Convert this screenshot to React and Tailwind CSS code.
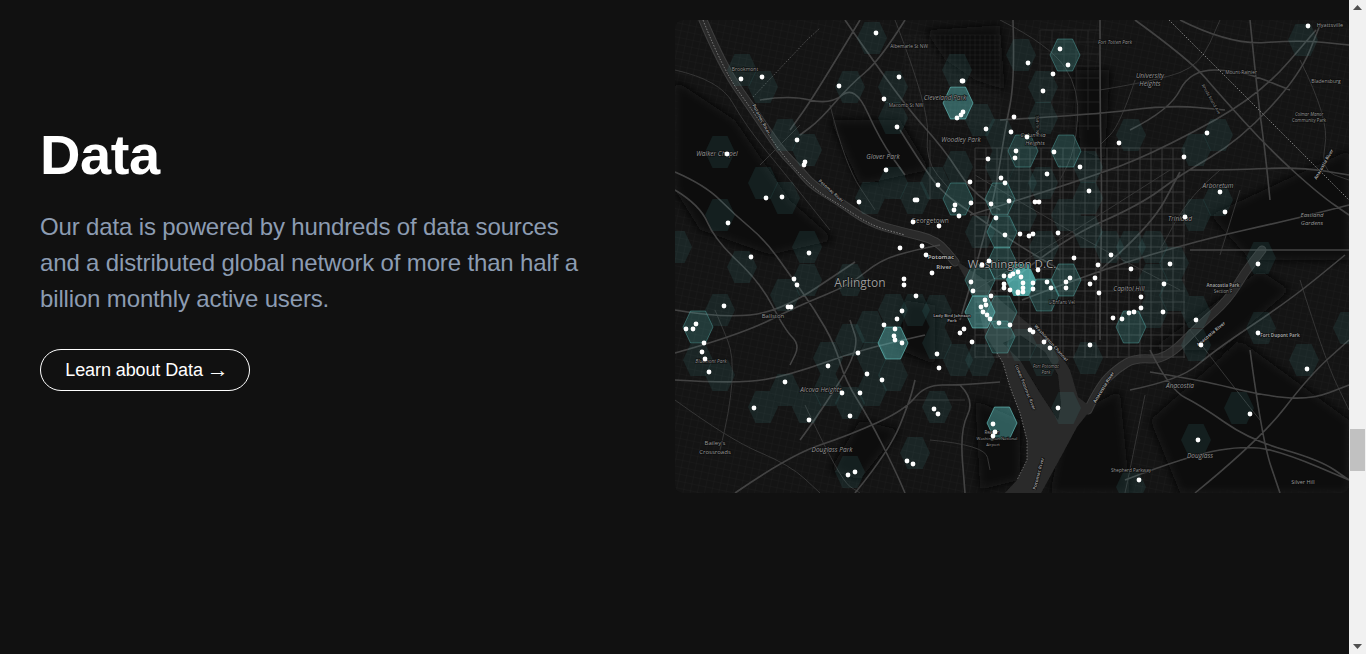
import React from 'react';

// all map data is in page pixels, the svg viewBox starts at the map's top left corner
const dimHexes = [
  [872, 38], [742, 70], [763, 87], [850, 87], [893, 87], [893, 118], [957, 70], [980, 120], [1000, 135],
  [785, 135], [807, 150], [720, 152], [763, 183], [785, 198], [720, 215], [677, 247], [807, 247],
  [870, 198], [893, 183], [915, 198], [935, 183], [1043, 87], [1043, 118], [1088, 167], [1088, 198],
  [1131, 135], [1218, 135], [1196, 150], [1303, 40], [1218, 200], [1196, 215], [1109, 247], [1261, 258],
  [1043, 183], [1021, 55], [742, 267], [785, 295], [807, 280], [850, 280], [720, 310],
  [698, 360], [720, 375], [870, 327], [915, 310], [893, 310], [828, 358], [850, 403], [872, 390],
  [893, 375], [872, 358], [850, 340], [828, 390], [785, 390], [763, 407], [807, 407], [937, 343],
  [937, 407], [915, 453], [850, 472], [1088, 358], [1066, 408], [1196, 312], [1196, 345], [1261, 328],
  [1348, 328], [1304, 360], [1239, 408], [1196, 440], [1131, 487], [1174, 263], [1153, 280], [1131, 247],
  [1153, 312], [1174, 295], [1000, 167], [1022, 183], [1066, 215], [1088, 232], [1044, 247], [1022, 215],
  [958, 167], [980, 232], [1153, 247], [958, 360], [980, 360], [937, 311], [1022, 345], [1044, 360],
];
const midHexes = [
  [958, 199], [1000, 199], [1002, 232], [1065, 55], [1066, 151], [1023, 151], [698, 327],
  [1066, 280], [1044, 295], [1131, 327], [980, 280], [1002, 312], [1000, 337], [1002, 263],
];
const brightHexes = [[958, 103], [893, 343], [980, 312], [1002, 423]];

const dots = [
  [876, 33], [741, 79], [762, 77], [839, 86], [899, 77], [884, 99], [962, 81], [963, 81], [963, 112], [961, 115],
  [957, 118], [897, 127], [1014, 117], [986, 129], [1011, 132], [797, 140], [805, 162], [804, 165], [727, 154],
  [988, 159], [1016, 151], [1015, 158], [886, 170], [938, 185], [970, 182], [1001, 178], [1005, 183], [766, 198],
  [782, 197], [859, 202], [915, 200], [917, 200], [955, 205], [954, 210], [971, 203], [991, 204], [1009, 201],
  [728, 223], [959, 216], [996, 218], [913, 222], [939, 226], [1005, 235], [809, 253], [900, 248], [922, 246],
  [751, 257], [926, 255], [1308, 26], [1060, 49], [1068, 65], [1028, 63], [1053, 74], [1043, 91], [1027, 137],
  [1054, 152], [1119, 143], [1207, 133], [1184, 157], [1080, 167], [1047, 174], [1089, 191], [1035, 202],
  [1039, 202], [1220, 192], [1225, 212], [1185, 217], [1020, 234], [1029, 236], [1033, 234], [1058, 233],
  [1074, 258], [1111, 255], [794, 279], [797, 285], [904, 279], [904, 285], [932, 273], [916, 296], [989, 261],
  [982, 265], [724, 306], [788, 307], [791, 307], [902, 311], [897, 319], [884, 325], [895, 329], [894, 336],
  [895, 340], [902, 343], [686, 329], [693, 329], [696, 324], [704, 343], [702, 352], [705, 359], [709, 372],
  [858, 353], [828, 366], [867, 374], [882, 380], [785, 382], [842, 393], [860, 393], [754, 408], [809, 420],
  [850, 416], [937, 354], [939, 368], [934, 409], [938, 414], [907, 461], [913, 464], [855, 472], [848, 475],
  [960, 333], [964, 329], [972, 342], [971, 282], [973, 291], [991, 296], [985, 300], [986, 305], [981, 307],
  [983, 312], [987, 315], [990, 319], [999, 323], [1010, 325], [993, 424], [995, 432], [993, 436], [1004, 276],
  [1004, 284], [1004, 288], [1010, 276], [1013, 274], [1018, 272], [1010, 290], [1018, 292], [1098, 265],
  [1131, 269], [1170, 264], [1258, 264], [1038, 270], [1021, 277], [1047, 282], [1066, 282], [1070, 278],
  [1095, 278], [1090, 284], [1164, 284], [1033, 283], [1033, 289], [1051, 288], [1066, 288], [1099, 293],
  [1023, 283], [1023, 288], [1018, 293], [1023, 292], [1141, 297], [1141, 308], [1134, 312], [1129, 313],
  [1163, 312], [1113, 318], [1122, 319], [1196, 320], [1258, 333], [1201, 345], [1090, 345], [1030, 330],
  [1033, 332], [1044, 342], [1050, 348], [1307, 369], [1058, 408], [1250, 414], [1198, 440], [1139, 480],
];

const majorRoads = [
  [675, 172, 705, 185, 735, 215, 765, 240, 790, 275, 815, 310, 835, 345, 845, 380, 870, 420, 895, 470, 905, 493],
  [675, 190, 700, 205, 715, 240, 760, 282, 785, 330, 800, 345, 790, 365],
  [675, 380, 740, 384, 790, 375, 860, 350, 925, 335],
  [675, 353, 740, 335, 800, 305, 850, 285, 880, 260, 915, 250, 940, 245],
  [675, 310, 720, 318, 780, 312, 855, 262],
  [735, 493, 790, 455, 850, 435, 905, 410, 925, 385, 960, 385, 1000, 382],
  [855, 493, 890, 450, 910, 400, 915, 380],
  [800, 440, 815, 420, 860, 350, 850, 320],
  [900, 130, 925, 170, 945, 195, 975, 215, 1010, 240, 1060, 270],
  [845, 20, 900, 100, 945, 150, 970, 190, 1000, 210],
  [860, 20, 815, 95, 790, 130],
  [905, 20, 880, 60, 850, 85, 820, 120, 800, 135],
  [760, 100, 790, 95, 830, 105, 855, 85, 880, 140, 905, 175],
  [1013, 20, 1015, 80, 1005, 130, 995, 195, 975, 270, 960, 320],
  [1100, 20, 1100, 110, 1102, 200, 1100, 300, 1100, 340],
  [1135, 20, 1190, 60, 1220, 95, 1270, 150, 1320, 195, 1349, 215],
  [1022, 300, 1100, 270, 1200, 240, 1290, 220, 1349, 205],
  [1000, 290, 1060, 240, 1140, 205, 1180, 175, 1240, 140, 1300, 75, 1320, 25],
  [970, 215, 1100, 175, 1170, 145, 1260, 95, 1316, 30],
  [1190, 170, 1230, 170, 1300, 167, 1349, 175],
  [1100, 270, 1150, 228, 1180, 172],
  [1000, 120, 1090, 115, 1170, 105, 1225, 110],
  [1130, 130, 1170, 110, 1190, 70, 1240, 70, 1290, 90],
  [1150, 350, 1170, 390, 1200, 405, 1250, 440, 1320, 460, 1349, 480],
  [1150, 372, 1200, 380, 1260, 395, 1310, 400, 1349, 385],
  [1195, 493, 1260, 440, 1310, 375, 1349, 340],
  [1130, 390, 1180, 380, 1215, 350, 1290, 300, 1345, 255],
  [1125, 480, 1190, 455, 1250, 445, 1290, 455, 1349, 480],
  [1250, 20, 1258, 100, 1265, 150, 1270, 200],
  [1180, 20, 1230, 45, 1300, 40, 1349, 45],
  [1250, 350, 1262, 440, 1280, 493],
  [960, 385, 975, 400, 960, 430, 965, 493],
  [1190, 250, 1349, 250],
];

const minorRoads = [
  [675, 70, 720, 80, 745, 125, 790, 180, 830, 230],
  [830, 105, 845, 165, 875, 210],
  [895, 20, 930, 110, 925, 160, 950, 190],
  [930, 140, 930, 200],
  [760, 165, 800, 125],
  [675, 400, 730, 440, 790, 465, 820, 493],
  [805, 405, 840, 480, 860, 493],
  [720, 450, 740, 370, 715, 310],
  [1000, 20, 1050, 45, 1080, 90, 1075, 150, 1060, 180],
  [1100, 90, 1160, 80, 1200, 65, 1220, 20],
  [1135, 80, 1120, 125, 1100, 145],
  [1220, 170, 1190, 195, 1160, 250],
  [1240, 190, 1220, 255],
  [1300, 280, 1325, 360, 1349, 410],
  [1190, 330, 1240, 395, 1260, 420],
  [1145, 395, 1130, 470, 1125, 493],
  [1300, 60, 1330, 120, 1320, 170, 1349, 180],
  [930, 440, 985, 445, 990, 470],
  [910, 400, 965, 400],
  [975, 175, 1075, 235, 1180, 290],
  [1060, 165, 1060, 360],
  [975, 290, 1060, 240, 1170, 170],
];

// turns a flat list of points into a line that bends smoothly through their midpoints
const smoothLine = (p) => {
  let d = `M${p[0]} ${p[1]}`;
  for (let i = 2; i < p.length - 2; i += 2) {
    d += ` Q${p[i]} ${p[i + 1]} ${(p[i] + p[i + 2]) / 2} ${(p[i + 1] + p[i + 3]) / 2}`;
  }
  return `${d} L${p[p.length - 2]} ${p[p.length - 1]}`;
};

const gridLines = (x1, y1, x2, y2, step) => {
  const lines = [];
  for (let x = x1; x <= x2; x += step) lines.push(`M${x} ${y1} L${x} ${y2}`);
  for (let y = y1; y <= y2; y += step) lines.push(`M${x1} ${y} L${x2} ${y}`);
  return lines.join(' ');
};

const labels = [
  { x: 860, y: 287, text: 'Arlington', size: 12, fill: '#9c9c9c' },
  { x: 1012, y: 268, text: 'Washington D.C.', size: 11.5, fill: '#a5a5a5' },
  { x: 941, y: 259, text: 'Potomac', size: 6, fill: '#a8a8a8', bold: true },
  { x: 944, y: 269, text: 'River', size: 6, fill: '#a8a8a8', bold: true },
  { x: 945, y: 100, text: 'Cleveland Park', size: 6.5, italic: true },
  { x: 961, y: 142, text: 'Woodley Park', size: 6.5, italic: true },
  { x: 883, y: 159, text: 'Glover Park', size: 6.5, italic: true },
  { x: 717, y: 156, text: 'Walker Chapel', size: 6.5, italic: true },
  { x: 745, y: 71, text: 'Brookmont', size: 5 },
  { x: 909, y: 48, text: 'Albemarle St NW', size: 4.8 },
  { x: 906, y: 107, text: 'Macomb St NW', size: 4.8 },
  { x: 930, y: 223, text: 'Georgetown', size: 6.5 },
  { x: 773, y: 318, text: 'Ballston', size: 6 },
  { x: 821, y: 392, text: 'Alcova Heights', size: 6.5, italic: true },
  { x: 711, y: 363, text: 'Bluemont Park', size: 4.8, italic: true },
  { x: 715, y: 445, text: "Bailey's", size: 6 },
  { x: 715, y: 454, text: 'Crossroads', size: 6 },
  { x: 832, y: 452, text: 'Douglass Park', size: 6.5, italic: true },
  { x: 1115, y: 44, text: 'Fort Totten Park', size: 4.8, italic: true },
  { x: 1150, y: 78, text: 'University', size: 6.5, italic: true },
  { x: 1150, y: 86, text: 'Heights', size: 6.5, italic: true },
  { x: 1241, y: 74, text: 'Mount Rainier', size: 4.8 },
  { x: 1330, y: 27, text: 'Hyattsville', size: 5.5 },
  { x: 1326, y: 83, text: 'Bladensburg', size: 5 },
  { x: 1309, y: 116, text: 'Colmar Manor', size: 4.4, italic: true },
  { x: 1309, y: 122, text: 'Community Park', size: 4.4 },
  { x: 1218, y: 188, text: 'Arboretum', size: 6.5, italic: true },
  { x: 1180, y: 221, text: 'Trinidad', size: 6.5, italic: true },
  { x: 1312, y: 217, text: 'Eastland', size: 6, italic: true },
  { x: 1312, y: 225, text: 'Gardens', size: 6, italic: true },
  { x: 1033, y: 137, text: 'Columbia', size: 6, italic: true },
  { x: 1035, y: 145, text: 'Heights', size: 6, italic: true },
  { x: 1129, y: 291, text: 'Capitol Hill', size: 6.5, italic: true },
  { x: 1062, y: 304, text: "L'Enfant Vel", size: 4.8 },
  { x: 1223, y: 287, text: 'Anacostia Park', size: 4.4, bold: true },
  { x: 1223, y: 293, text: 'Section F', size: 4.4 },
  { x: 1280, y: 337, text: 'Fort Dupont Park', size: 4.6, bold: true },
  { x: 1180, y: 388, text: 'Anacostia', size: 6.5, italic: true },
  { x: 1200, y: 458, text: 'Douglass', size: 6.5, italic: true },
  { x: 1131, y: 472, text: 'Shepherd Parkway', size: 4.6 },
  { x: 1303, y: 484, text: 'Silver Hill', size: 5.5 },
  { x: 1046, y: 368, text: 'Fort Potomac', size: 4.4, italic: true },
  { x: 1046, y: 374, text: 'Park', size: 4.4, italic: true },
  { x: 952, y: 317, text: 'Lady Bird Johnson', size: 4.2, bold: true },
  { x: 952, y: 322, text: 'Park', size: 4.2, bold: true },
  { x: 992, y: 434, text: 'Reagan', size: 4.4 },
  { x: 997, y: 440, text: 'Washington National', size: 4.2 },
  { x: 993, y: 446, text: 'Airport', size: 4.2 },
  { x: 1024, y: 388, text: 'Lower Potomac River', size: 4.6, bold: true, angle: 68, fill: '#8f8f8f' },
  { x: 1040, y: 474, text: 'Potomac River', size: 4.6, bold: true, angle: -75, fill: '#8f8f8f' },
  { x: 1050, y: 344, text: 'Washington Channel', size: 4.6, bold: true, angle: 48, fill: '#8f8f8f' },
  { x: 1105, y: 388, text: 'Anacostia River', size: 4.6, bold: true, angle: -58, fill: '#a5a5a5' },
  { x: 1212, y: 335, text: 'Anacostia River', size: 4.6, bold: true, angle: -40, fill: '#a5a5a5' },
  { x: 1036, y: 126, text: '16th St NW', size: 4.2, angle: 90 },
  { x: 1210, y: 100, text: 'Rhode Island Ave', size: 4.2, angle: 60 },
  { x: 1325, y: 165, text: 'Anacostia River', size: 4.4, bold: true, angle: -60, fill: '#a5a5a5' },
  { x: 760, y: 120, text: 'Potomac River', size: 4.6, bold: true, angle: 62, fill: '#8f8f8f' },
  { x: 830, y: 192, text: 'Potomac River', size: 4.4, bold: true, angle: 42, fill: '#8f8f8f' },
];

const hexPoints = ([cx, cy]) =>
  `${cx - 15},${cy} ${cx - 7.5},${cy - 16} ${cx + 7.5},${cy - 16} ${cx + 15},${cy} ${cx + 7.5},${cy + 16} ${cx - 7.5},${cy + 16}`;

const CityMap = () => (
  <svg viewBox="675 20 674 473" className="block h-[473px] w-[674px] rounded-lg">
    <defs>
      <pattern id="streets" width="7" height="7" patternUnits="userSpaceOnUse" patternTransform="rotate(12)">
        <path d="M7 0H0V7" fill="none" stroke="#212121" strokeWidth="0.6" />
      </pattern>
      <filter id="soft"><feGaussianBlur stdDeviation="0.3" /></filter>
      <filter id="parks"><feGaussianBlur stdDeviation="5" /></filter>
      <clipPath id="mapArea"><rect x="675" y="20" width="674" height="473" /></clipPath>
    </defs>

    <g clipPath="url(#mapArea)">
      <rect x="675" y="20" width="674" height="473" fill="#141414" />
      <rect x="675" y="20" width="674" height="473" fill="url(#streets)" />

      {/* parks and other dark ground */}
      <g fill="#090909" filter="url(#parks)">
        <path d="M675 80 L735 120 L790 200 L835 240 L770 255 L700 230 L675 190Z" />
        <path d="M830 120 L900 120 L930 170 L860 185Z" />
        <path d="M925 30 L1000 25 L1005 90 L975 80 L945 60Z" />
        <path d="M1075 70 L1110 70 L1105 160 L1080 150Z" />
        <path d="M1210 215 L1349 150 L1349 260 L1250 260Z" />
        <path d="M1240 340 L1349 420 L1349 493 L1180 493 L1150 420Z" />
        <path d="M905 300 L935 305 L935 365 L900 350Z" />
        <path d="M860 420 L900 430 L860 480 L830 470Z" />
        <path d="M1150 350 L1260 270 L1290 290 L1220 350Z" />
        <path d="M1065 420 L1120 390 L1130 493 L1050 493Z" />
        <path d="M975 400 L1020 420 L1020 480 L980 490Z" />
      </g>

      {/* rivers */}
      <g strokeLinecap="round" strokeLinejoin="round" filter="url(#soft)">
        <path d={smoothLine([703, 20, 723, 67, 753, 110, 780, 150, 797, 167, 812, 185, 837, 200, 870, 223, 903, 232, 937, 240, 955, 262])} fill="none" stroke="#3d3d3d" strokeWidth="9" />
        <path d={smoothLine([703, 20, 723, 67, 753, 110, 780, 150, 797, 167, 812, 185, 837, 200, 870, 223, 903, 232, 937, 240, 955, 262])} fill="none" stroke="#2a2a2a" strokeWidth="7" />
        <path d={smoothLine([1088, 410, 1100, 385, 1118, 368, 1135, 358, 1165, 360, 1200, 325, 1228, 300, 1245, 272, 1262, 250])} fill="none" stroke="#3b3b3b" strokeWidth="9" />
        <path d={smoothLine([1088, 410, 1100, 385, 1118, 368, 1135, 358, 1165, 360, 1200, 325, 1228, 300, 1245, 272, 1262, 250])} fill="none" stroke="#2a2a2a" strokeWidth="7" />
        <path d="M955 260 L975 295 L985 335 L997 353 L1003 363 L1010 387 L1020 413 L1027 440 L1027 460 L1017 480 L1003 495 L1040 495 L1063 453 L1077 427 L1092 408 L1078 397 L1070 370 L1055 345 L1030 325 L1000 300 L985 280Z" fill="#2a2a2a" />
        <path d="M1003 343 L1020 360 L1040 393 L1058 420 L1061 405 L1058 375 L1045 352 L1020 335Z" fill="#121212" />
      </g>

      {/* street grids in the city */}
      <g fill="none" filter="url(#soft)">
        <path d={gridLines(975, 148, 1185, 358, 11)} stroke="#434343" strokeWidth="0.8" />
        <path d={gridLines(905, 35, 1000, 125, 5)} stroke="#242424" strokeWidth="0.5" />
        <path d={gridLines(1040, 30, 1100, 130, 12)} stroke="#2e2e2e" strokeWidth="0.6" />
        <path d={minorRoads.map(smoothLine).join(' ')} stroke="#353535" strokeWidth="1" />
        <path d={majorRoads.map(smoothLine).join(' ')} stroke="#434343" strokeWidth="1.6" strokeLinejoin="round" />
      </g>

      {/* dotted boundary lines */}
      <g fill="none" stroke="#a8a8a8" strokeDasharray="1.5 1.5" strokeWidth="0.7">
        <path d="M1169 20 L1349 200" />
        <path d="M753 97 L807 40 L820 28" opacity="0.6" />
        <path d={smoothLine([703, 20, 723, 70, 755, 114, 782, 155, 815, 190, 840, 205, 872, 226, 905, 235])} />
        <path d="M997 353 L1003 363 L1010 387 L1020 413 L1027 440 L1027 460 L1017 480" opacity="0.8" />
      </g>

      {/* hexagon bins */}
      <g>
        {dimHexes.map((h) => (
          <polygon key={h.join()} points={hexPoints(h)} fill="#4fb3b0" fillOpacity="0.115" />
        ))}
        {midHexes.map((h) => (
          <polygon key={h.join()} points={hexPoints(h)} fill="#58c2c0" fillOpacity="0.22" stroke="#63c9c6" strokeOpacity="0.45" strokeWidth="0.8" />
        ))}
        {brightHexes.map((h) => (
          <polygon key={h.join()} points={hexPoints(h)} fill="#5fc9c6" fillOpacity="0.42" stroke="#6fd5d2" strokeOpacity="0.7" strokeWidth="0.8" />
        ))}
        <polygon points={hexPoints([1021, 280])} fill="#5fd0cd" fillOpacity="0.72" />
      </g>

      {/* place names */}
      <g fontFamily="'Open Sans', 'Noto Sans', sans-serif" textAnchor="middle">
        {labels.map((l) => (
          <text
            key={l.text + l.x}
            x={l.x}
            y={l.y}
            transform={l.angle ? `rotate(${l.angle} ${l.x} ${l.y})` : undefined}
            fontSize={l.size}
            fontStyle={l.italic ? 'italic' : 'normal'}
            fontWeight={l.bold ? 700 : 400}
            fill={l.fill || '#9a9a9a'}
            stroke="#0b0b0b"
            strokeWidth="1.2"
            paintOrder="stroke"
          >
            {l.text}
          </text>
        ))}
      </g>

      {/* users */}
      <g fill="#ffffff">
        {dots.map((d) => (
          <circle key={d.join()} cx={d[0]} cy={d[1]} r="2.4" />
        ))}
      </g>
    </g>
  </svg>
);

const Scrollbar = () => (
  <div className="flex w-[17px] shrink-0 flex-col items-center bg-[#f1f1f1]">
    <svg width="17" height="17" viewBox="0 0 17 17" className="shrink-0">
      <path d="M8.5 5 L13 10 H4Z" fill="#505050" />
    </svg>
    <div className="flex-1 w-full pt-[412px]">
      <div className="mx-auto h-[42px] w-[15px] bg-[#c1c1c1]" />
    </div>
    <svg width="17" height="17" viewBox="0 0 17 17" className="shrink-0">
      <path d="M4 7 H13 L8.5 12Z" fill="#505050" />
    </svg>
  </div>
);

export default function App() {
  return (
    <div className="flex h-[654px] overflow-hidden bg-[#111111] font-['Liberation_Sans',Arial,sans-serif]">
      <main className="flex min-w-0 flex-1 items-start pt-5">
        <section className="flex h-[473px] w-[675px] shrink-0 flex-col justify-center pl-10">
          <h2 className="text-[56px] leading-[64px] font-bold tracking-[-0.4px] text-white">Data</h2>
          <p className="mt-[22px] w-[560px] text-2xl leading-9 tracking-[-0.15px] text-[#8c9cb2]">
            Our data is powered by hundreds of data sources and a distributed global network of more than half a billion monthly active users.
          </p>
          <a className="mt-8 flex h-[42px] w-[210px] items-center justify-center gap-1 rounded-full border border-white pl-1 text-lg tracking-[-0.1px] text-white">
            Learn about Data <span className="text-[22px] leading-none">→</span>
          </a>
        </section>
        <CityMap />
      </main>
      <Scrollbar />
    </div>
  );
}
